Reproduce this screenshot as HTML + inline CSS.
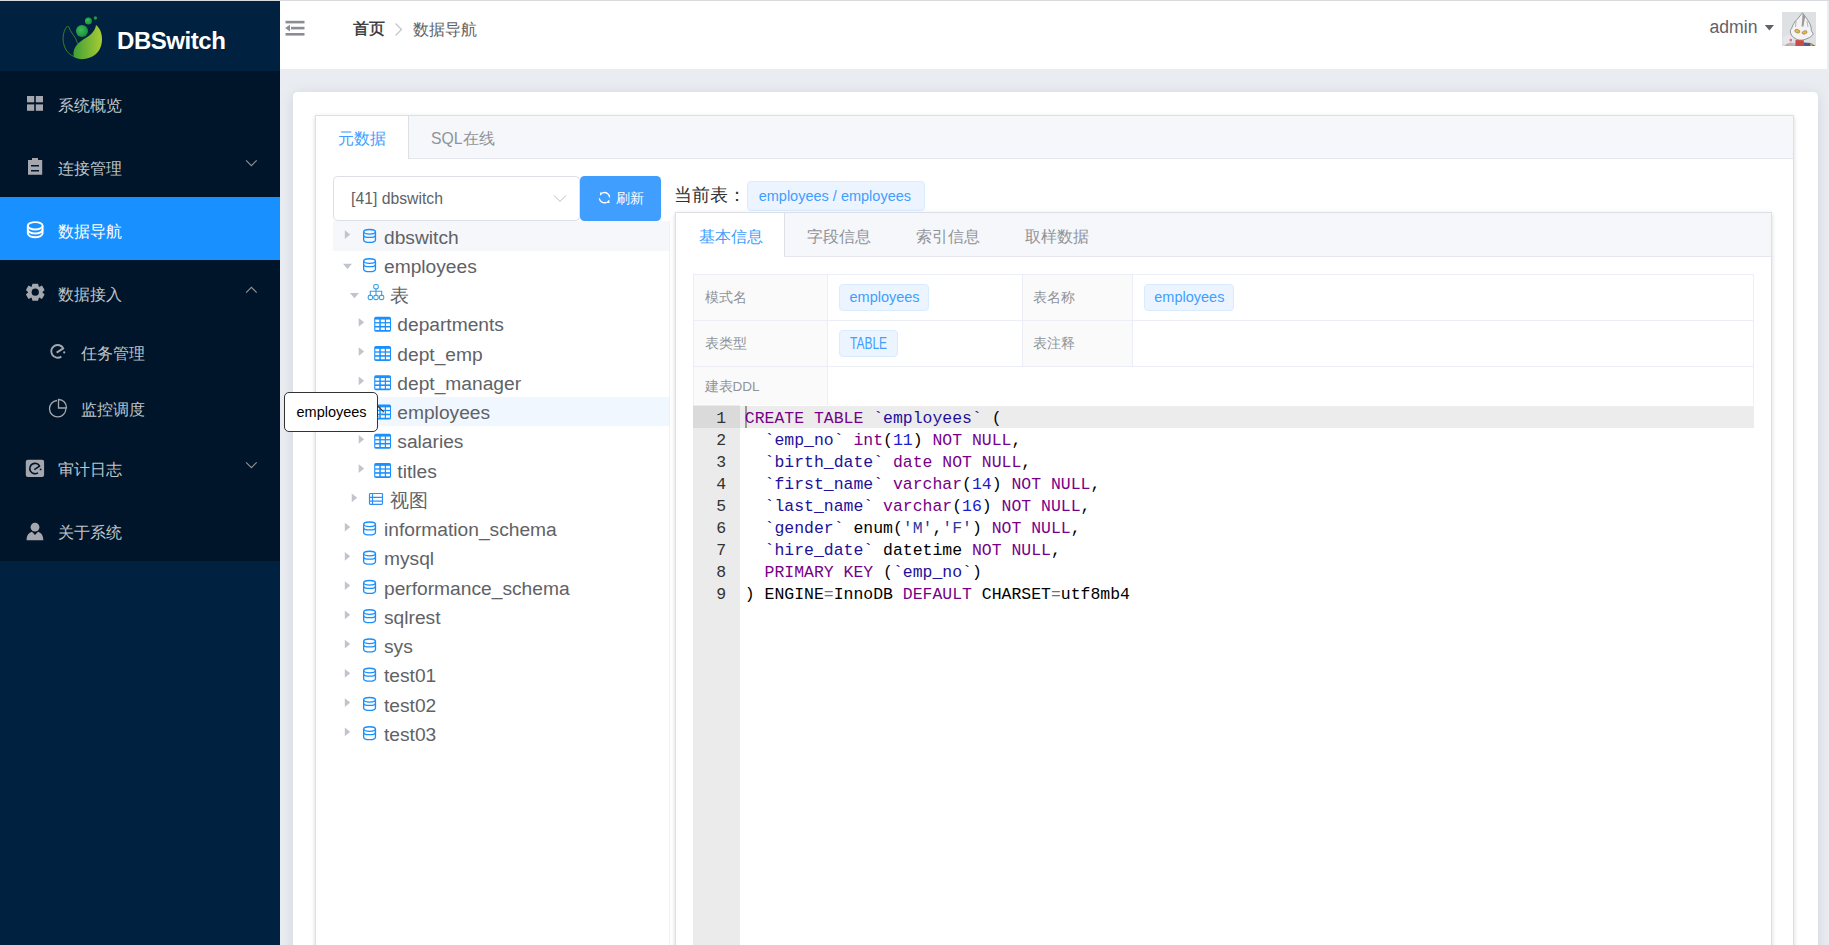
<!DOCTYPE html>
<html><head><meta charset="utf-8">
<style>
*{box-sizing:border-box;margin:0;padding:0}
html,body{width:1829px;height:945px;overflow:hidden}
body{position:relative;background:#e9ecf1;font-family:"Liberation Sans",sans-serif;color:#606266}
svg{position:absolute;overflow:visible}
#topline{position:absolute;left:0;top:0;width:1829px;height:1px;background:#d8dadd;z-index:50}
#sidebar{position:absolute;left:0;top:0;width:280px;height:945px;background:#002140}
#logo{position:absolute;left:0;top:0;width:280px;height:71px;background:#002140}
#logo .name{position:absolute;left:117px;top:25.5px;font-size:24px;font-weight:bold;color:#fff;line-height:30px;letter-spacing:-0.45px;white-space:nowrap}
#menu{position:absolute;left:0;top:71px;width:280px;height:490px;background:#001529}
.mi{position:absolute;left:0;width:280px;height:63px;color:#bfc5cc;font-size:15.75px}
.mi .t{position:absolute;left:58px;top:2.5px;line-height:63px;white-space:nowrap}
.mi.sub{height:56px}
.mi.sub .t{left:81px;line-height:56px}
.mi.active{background:#1890ff;color:#fff}
#header{position:absolute;left:280px;top:0;width:1547px;height:69px;background:#fff}
#header .bc1{position:absolute;left:73px;top:17px;font-size:15.75px;line-height:24px;color:#303133;-webkit-text-stroke:0.4px #303133}
#header .bc2{position:absolute;left:132.5px;top:18px;font-size:15.75px;line-height:24px;color:#606266}
#header .admin{position:absolute;left:1429.5px;top:14.3px;font-size:17.6px;line-height:26px;color:#5f6268}
#tabs .tab1{position:absolute;left:0;top:0;width:92.5px;height:43px;background:#fff;border-right:1px solid #dcdfe6}
.ttxt{position:absolute;margin-left:-1px;top:126.8px;font-size:15.75px;line-height:24px;white-space:nowrap}
.ttxt2{position:absolute;top:225px;font-size:15.75px;line-height:24px;white-space:nowrap;color:#909399}
#sel{position:absolute;left:333px;top:176px;width:247px;height:44.5px;border:1px solid #dcdfe6;border-radius:4.5px;background:#fff}
#sel span{position:absolute;left:17px;top:10px;font-size:15.75px;line-height:24px;color:#606266;white-space:nowrap}
#btn{position:absolute;left:580px;top:176px;width:81px;height:44.5px;border-radius:4.5px;background:#409eff}
#btn span{position:absolute;left:36px;top:10.8px;font-size:13.75px;line-height:24px;color:#fff;white-space:nowrap}
#tree{position:absolute;left:333px;top:221.3px;width:336.7px;height:600px}
#curlbl{position:absolute;left:674px;top:182.5px;font-size:17.8px;line-height:24px;color:#303133;white-space:nowrap}
.tag{position:absolute;background:#ecf5ff;border:1px solid #d9ecff;border-radius:4px;color:#409eff;font-size:14.5px;white-space:nowrap}
#tabs2{position:absolute;left:675px;top:212.3px;width:1097px;height:800px;background:#fff;border:1px solid #dcdfe6;box-shadow:0 2px 4px rgba(0,0,0,.12),0 0 6px rgba(0,0,0,.04)}
#tabs2 .hd{position:absolute;left:0;top:0;width:100%;height:44px;background:#f5f7fa;border-bottom:1px solid #e4e7ed}
#tabs2 .tab1{position:absolute;left:0;top:0;width:108.8px;height:44px;background:#fff;border-right:1px solid #dcdfe6}
#desc{position:absolute;left:693px;top:274px;width:1061px;height:131px}
#desc .lblbg{position:absolute;background:#fafafa}
#desc .hl{position:absolute;left:0;width:1061px;height:1px;background:#ebeef5}
#desc .vl{position:absolute;top:0;width:1px;background:#ebeef5}
#desc .lt{position:absolute;margin-top:1px;left:11.5px;font-size:13.5px;line-height:24px;color:#909399;white-space:nowrap}
.trow{position:absolute;left:0;width:336.7px;height:29.25px}
.tt{position:absolute;margin-top:1.3px;height:29.25px;line-height:29.25px;font-size:19.2px;color:#606266;white-space:nowrap}
#tip{position:absolute;left:284.2px;top:391.5px;width:93.5px;height:40px;background:#fff;border:1px solid #333;border-radius:5px;color:#000;font-size:14.5px;line-height:38px;padding-left:11.3px;z-index:20;white-space:nowrap}
#code{position:absolute;left:693px;top:405.2px;width:1060.5px;height:540px;background:#fff;font-family:"Liberation Mono",monospace;font-size:16.47px;color:#000}
#code .gutter{position:absolute;left:0;top:0;width:47px;height:540px;background:#ebebeb}
#code .gact{position:absolute;left:0;top:0.8px;width:47px;height:22px;background:#dadada}
#code .lact{position:absolute;left:47px;top:0.8px;width:1013.5px;height:22px;background:#ececec}
#code .cursor{position:absolute;left:51.9px;top:0.8px;width:2px;height:22px;background:#9a9a9a}
#code .ln{position:absolute;left:0;width:33px;text-align:right;height:22px;line-height:22px;padding-top:2.6px;color:#333}
#code .cl{position:absolute;left:51.8px;height:22px;line-height:22px;padding-top:2.6px;white-space:pre}
#code .k{color:#770088}
#code .v{color:#221199}
#code .n{color:#1a1ad0}
#code .s{color:#2e3a9e}
#code .o{color:#6a7480}
#card{position:absolute;left:293px;top:92px;width:1525px;height:900px;background:#fff;border-radius:4.5px;box-shadow:0 2.25px 13.5px 0 rgba(0,0,0,.1)}
#tabs{position:absolute;left:315px;top:115px;width:1479px;height:900px;background:#fff;border:1px solid #dcdfe6;box-shadow:0 2px 4px rgba(0,0,0,.12),0 0 6px rgba(0,0,0,.04)}
#tabs .hd{position:absolute;left:0;top:0;width:100%;height:43px;background:#f5f7fa;border-bottom:1px solid #e4e7ed}
</style></head><body>
<div id="topline"></div>
<div id="sidebar">
  <div id="logo">
    <svg width="280" height="71" style="left:0;top:0">
      <defs>
        <linearGradient id="lg" x1="0" y1="0" x2="1" y2="0">
          <stop offset="0" stop-color="#3f9f35"/><stop offset="1" stop-color="#a8cc34"/>
        </linearGradient>
        <radialGradient id="dg" cx="0.4" cy="0.4" r="0.7">
          <stop offset="0" stop-color="#3dbb55"/><stop offset="1" stop-color="#14883a"/>
        </radialGradient>
      </defs>
      <path d="M67.5 26 C60 34 62 52 74 56.5" fill="none" stroke="#3d8a2a" stroke-width="0.9"/>
      <path d="M68.4 26.2 C70.5 33 76 36.5 77.7 43.7" fill="none" stroke="#3d8a2a" stroke-width="0.9"/>
      <path d="M96 25 C104 31 104 47 96 54 C90 59 80 61 74 57 C72 50 76 44 84 39 C91 35 95 31 96 25 Z" fill="url(#lg)"/>
      <circle cx="82" cy="31" r="6" fill="url(#dg)"/>
      <circle cx="88.4" cy="21" r="3.5" fill="url(#dg)"/>
      <circle cx="95.4" cy="18" r="1.7" fill="#1f9a40"/>
    </svg>
    <div class="name">DBSwitch</div>
  </div>
  <div id="menu">
    <div class="mi" style="top:0"><span class="t">系统概览</span></div>
    <div class="mi" style="top:63px"><span class="t">连接管理</span></div>
    <div class="mi active" style="top:126px"><span class="t">数据导航</span></div>
    <div class="mi" style="top:189px"><span class="t">数据接入</span></div>
    <div class="mi sub" style="top:252px"><span class="t">任务管理</span></div>
    <div class="mi sub" style="top:308px"><span class="t">监控调度</span></div>
    <div class="mi" style="top:364px"><span class="t">审计日志</span></div>
    <div class="mi" style="top:427px"><span class="t">关于系统</span></div>
    <svg width="280" height="490" style="left:0;top:-71px">
      <g fill="#a4a7ad">
        <rect x="27" y="96" width="7.2" height="6.3"/><rect x="35.8" y="96" width="7.2" height="6.3"/>
        <rect x="27" y="104.4" width="7.2" height="6.4"/><rect x="35.8" y="104.4" width="7.2" height="6.4"/>
      </g>
      <path d="M28 160 H32 V158 H38 V160 H42.2 V174.8 H28 Z M31 165 V166.5 H39 V165 Z M31 170 V171.5 H39 V170 Z" fill="#a4a7ad" fill-rule="evenodd"/>
      <g fill="none" stroke="#fff" stroke-width="1.9">
        <ellipse cx="35.2" cy="225.8" rx="7.4" ry="3.7"/>
        <path d="M27.8 225.8 V233.3 C27.8 235.5 31 237.2 35.2 237.2 C39.4 237.2 42.6 235.5 42.6 233.3 V225.8"/>
        <path d="M27.8 229.6 C27.8 231.8 31 233.5 35.2 233.5 C39.4 233.5 42.6 231.8 42.6 229.6"/>
      </g>
      <path d="M32.5 283.8 H38 L39 287 L42 285.5 L44.6 290 L42.3 292.2 L44.6 294.5 L42 299 L39 297.5 L38 300.7 H32.5 L31.5 297.5 L28.5 299 L25.9 294.5 L28.2 292.2 L25.9 290 L28.5 285.5 L31.5 287 Z" fill="#a4a7ad"/>
      <circle cx="35.25" cy="292.2" r="3.6" fill="#001529"/>
      <g fill="none" stroke="#a4a7ad" stroke-width="1.9">
        <path d="M61.3 356.6 A6.4 6.4 0 1 1 63.3 348.4 L56.6 352.6" stroke-linejoin="round"/>
      </g>
      <circle cx="64.2" cy="352.4" r="1.1" fill="#a4a7ad"/>
      <g fill="none" stroke="#a4a7ad" stroke-width="1.3">
        <path d="M57 400.5 A8.2 8.2 0 1 0 65.9 408.8"/>
        <path d="M58.5 399.5 V408 H66.5 A8 8 0 0 0 58.5 399.5 Z"/>
      </g>
      <rect x="25.8" y="459.7" width="18.3" height="17.3" rx="2" fill="#a4a7ad"/>
      <g fill="none" stroke="#001529" stroke-width="1.6">
        <path d="M38 472.8 A5.2 5.2 0 1 1 39.6 466.1 L34.3 469.55" stroke-linejoin="round"/>
      </g>
      <circle cx="40.6" cy="469.4" r="0.95" fill="#001529"/>
      <circle cx="35" cy="527.2" r="4.4" fill="#a4a7ad"/>
      <path d="M26.6 540.2 C26.6 535 29 532.6 32 531.8 L35 535 L38 531.8 C41 532.6 43.3 535 43.3 540.2 Z" fill="#a4a7ad"/>
      <g fill="none" stroke="#909399" stroke-width="1.1">
        <path d="M246.1 160.3 L251.4 165.6 L256.7 160.3"/>
        <path d="M246.1 292.6 L251.4 287.3 L256.7 292.6"/>
        <path d="M246.1 462.3 L251.4 467.6 L256.7 462.3"/>
      </g>
    </svg>
  </div>
</div>
<div id="header">
  <svg width="40" height="40" style="left:0;top:0">
    <g fill="#8a8d93">
      <rect x="5.5" y="20.8" width="19" height="2.6"/>
      <rect x="11" y="26.8" width="13.5" height="2.6"/>
      <rect x="5.5" y="33" width="19" height="2.6"/>
      <path d="M5.2 28.1 L10 24.8 V31.4 Z"/>
    </g>
  </svg>
  <div class="bc1">首页</div>
  <svg width="20" height="20" style="left:0;top:0"><path d="M115.5 23.5 L121.5 29.5 L115.5 35.5" fill="none" stroke="#c0c4cc" stroke-width="1.2"/></svg>
  <div class="bc2">数据导航</div>
  <div class="admin">admin</div>
  <svg width="20" height="20" style="left:0;top:0"><path d="M1484.8 25 H1494 L1489.4 30.4 Z" fill="#5f6268"/></svg>
  <svg width="34" height="34" style="left:1502px;top:12px">
    <rect width="34" height="34" fill="#dee1e3"/>
    <circle cx="6" cy="28" r="5" fill="#e9e7ec"/>
    <rect x="7.6" y="28.5" width="2.6" height="5.5" fill="#efc7cd"/>
    <circle cx="8.8" cy="28" r="1.3" fill="#d4747c"/>
    <path d="M20.5 0.8 L25 7 C28 11 29.6 15 29.3 18.5 L31.3 22 C30 24 28 25.5 26 26.2 C23 27.6 20 28.5 17 28 C13 27.2 9.8 24.5 8.8 21.5 C8 19.5 8.2 17.8 9.6 16.6 C10.6 13 12.6 9.6 15 7.6 C17 5 19 2.8 20.5 0.8 Z" fill="#f3f3f3" stroke="#5b5b5b" stroke-width="0.6"/>
    <path d="M20.6 1.5 L19.6 14.5 L21.4 14.5 L23.2 4.5 Z" fill="#9b9b9b"/>
    <path d="M14 9 L13.5 15 M25 9 L26 15" stroke="#777" stroke-width="0.5" fill="none"/>
    <ellipse cx="15.3" cy="19.2" rx="2.7" ry="1.7" transform="rotate(18 15.3 19.2)" fill="#f1b53d" stroke="#555" stroke-width="0.4"/>
    <ellipse cx="22.6" cy="20.4" rx="2.6" ry="1.6" transform="rotate(-18 22.6 20.4)" fill="#f1b53d" stroke="#555" stroke-width="0.4"/>
    <path d="M13.6 28 L21.6 28.2 L22.6 34 L13.2 34 Z" fill="#c94b46"/>
    <path d="M21.8 30.5 L28.5 31 L33.5 34 L22.2 34 Z" fill="#4e5b8f"/>
    <path d="M2 34 L6 31 L12.5 31 L13.2 34 Z" fill="#9aa0b8" opacity="0.6"/>
    <rect x="28.3" y="31.3" width="2.2" height="2.7" fill="#d8a43e"/>
    <rect x="4.6" y="32" width="1.6" height="2" fill="#d8a43e"/>
  </svg>
</div>
<div id="card"></div>
<div id="tabs"><div class="hd"></div>
  <div class="tab1"></div>
</div>
<div class="ttxt" style="left:338.7px;color:#409eff">元数据</div>
<div class="ttxt" style="left:432px;color:#909399">SQL在线</div>
<div id="sel"><span>[41] dbswitch</span></div>
<svg width="20" height="10" style="left:0;top:0"><path d="M554 195.4 L560 201.4 L566 195.4" fill="none" stroke="#aeb2ba" stroke-width="0.85"/></svg>
<div id="btn"><span>刷新</span></div>
<svg width="20" height="20" style="left:0;top:0">
  <g fill="none" stroke="#fff" stroke-width="1.3">
    <path d="M602.6 192.9 A5.1 5.1 0 0 1 609.6 197.6"/>
    <path d="M606.4 202.3 A5.1 5.1 0 0 1 599.3 198.4"/>
  </g>
  <path d="M599.9 192.6 L603.6 192.6 L600.2 195.8 Z" fill="#fff"/>
  <path d="M609.5 203 L605.8 203 L609.3 199.6 Z" fill="#fff"/>
</svg>
<div id="tree">
<div class="trow" style="top:0.00px;background:#f5f7fa"></div>
<div class="tt" style="left:51.00px;top:0.00px">dbswitch</div>
<div class="tt" style="left:51.00px;top:29.25px">employees</div>
<div class="tt" style="left:57.20px;top:58.50px">表</div>
<div class="tt" style="left:64.30px;top:87.75px">departments</div>
<div class="tt" style="left:64.30px;top:117.00px">dept_emp</div>
<div class="tt" style="left:64.30px;top:146.25px">dept_manager</div>
<div class="trow" style="top:175.50px;background:#f0f7ff"></div>
<div class="tt" style="left:64.30px;top:175.50px">employees</div>
<div class="tt" style="left:64.30px;top:204.75px">salaries</div>
<div class="tt" style="left:64.30px;top:234.00px">titles</div>
<div class="tt" style="left:57.20px;top:263.25px">视图</div>
<div class="tt" style="left:51.00px;top:292.50px">information_schema</div>
<div class="tt" style="left:51.00px;top:321.75px">mysql</div>
<div class="tt" style="left:51.00px;top:351.00px">performance_schema</div>
<div class="tt" style="left:51.00px;top:380.25px">sqlrest</div>
<div class="tt" style="left:51.00px;top:409.50px">sys</div>
<div class="tt" style="left:51.00px;top:438.75px">test01</div>
<div class="tt" style="left:51.00px;top:468.00px">test02</div>
<div class="tt" style="left:51.00px;top:497.25px">test03</div>
<svg width="10" height="10" style="left:-333px;top:-221.3px"><g transform="translate(0,-1)"><path d="M344.80 231.20 L350.20 235.60 L344.80 240.00 Z" fill="#c0c4cc"/></g>
<g fill="none" stroke="#1890ff" stroke-width="1.35" transform="translate(363.00,228.90)"><ellipse cx="6.55" cy="2.9" rx="5.9" ry="2.3"/><path d="M0.65 2.9 V11 C0.65 12.4 3.3 13.45 6.55 13.45 C9.8 13.45 12.45 12.4 12.45 11 V2.9"/><path d="M0.65 6.3 C0.65 7.6 3.3 8.5 6.55 8.5 C9.8 8.5 12.45 7.6 12.45 6.3"/></g>
<g transform="translate(0,0.7)"><path d="M343.00 263.05 L352.00 263.05 L347.50 268.35 Z" fill="#c0c4cc"/></g>
<g fill="none" stroke="#1890ff" stroke-width="1.35" transform="translate(363.00,258.15)"><ellipse cx="6.55" cy="2.9" rx="5.9" ry="2.3"/><path d="M0.65 2.9 V11 C0.65 12.4 3.3 13.45 6.55 13.45 C9.8 13.45 12.45 12.4 12.45 11 V2.9"/><path d="M0.65 6.3 C0.65 7.6 3.3 8.5 6.55 8.5 C9.8 8.5 12.45 7.6 12.45 6.3"/></g>
<g transform="translate(0,0.7)"><path d="M349.95 292.30 L358.95 292.30 L354.45 297.60 Z" fill="#c0c4cc"/></g>
<g fill="none" stroke="#3aa0e0" stroke-width="1.1" transform="translate(368,284.00)"><rect x="5.7" y="0.5" width="4.6" height="4.4" rx="1.6"/><path d="M8 4.9 V7.3 M2.3 11.4 V7.3 H13.7 V11.4 M8 7.3 V11.4"/><rect x="0.2" y="11.4" width="4.4" height="4.2" rx="1.6"/><rect x="5.8" y="11.4" width="4.4" height="4.2" rx="1.6"/><rect x="11.4" y="11.4" width="4.4" height="4.2" rx="1.6"/></g>
<g transform="translate(0,-1)"><path d="M358.70 318.95 L364.10 323.35 L358.70 327.75 Z" fill="#c0c4cc"/></g>
<g transform="translate(374.20,316.80)"><rect x="0" y="0" width="16.8" height="14.9" rx="1.6" fill="#1890ff"/><rect x="1.10" y="2.80" width="4.0" height="2.5" fill="#fff"/><rect x="6.60" y="2.80" width="4.0" height="2.5" fill="#fff"/><rect x="11.80" y="2.80" width="4.0" height="2.5" fill="#fff"/><rect x="1.10" y="6.60" width="4.0" height="2.5" fill="#fff"/><rect x="6.60" y="6.60" width="4.0" height="2.5" fill="#fff"/><rect x="11.80" y="6.60" width="4.0" height="2.5" fill="#fff"/><rect x="1.10" y="10.70" width="4.0" height="2.5" fill="#fff"/><rect x="6.60" y="10.70" width="4.0" height="2.5" fill="#fff"/><rect x="11.80" y="10.70" width="4.0" height="2.5" fill="#fff"/></g>
<g transform="translate(0,-1)"><path d="M358.70 348.20 L364.10 352.60 L358.70 357.00 Z" fill="#c0c4cc"/></g>
<g transform="translate(374.20,346.05)"><rect x="0" y="0" width="16.8" height="14.9" rx="1.6" fill="#1890ff"/><rect x="1.10" y="2.80" width="4.0" height="2.5" fill="#fff"/><rect x="6.60" y="2.80" width="4.0" height="2.5" fill="#fff"/><rect x="11.80" y="2.80" width="4.0" height="2.5" fill="#fff"/><rect x="1.10" y="6.60" width="4.0" height="2.5" fill="#fff"/><rect x="6.60" y="6.60" width="4.0" height="2.5" fill="#fff"/><rect x="11.80" y="6.60" width="4.0" height="2.5" fill="#fff"/><rect x="1.10" y="10.70" width="4.0" height="2.5" fill="#fff"/><rect x="6.60" y="10.70" width="4.0" height="2.5" fill="#fff"/><rect x="11.80" y="10.70" width="4.0" height="2.5" fill="#fff"/></g>
<g transform="translate(0,-1)"><path d="M358.70 377.45 L364.10 381.85 L358.70 386.25 Z" fill="#c0c4cc"/></g>
<g transform="translate(374.20,375.30)"><rect x="0" y="0" width="16.8" height="14.9" rx="1.6" fill="#1890ff"/><rect x="1.10" y="2.80" width="4.0" height="2.5" fill="#fff"/><rect x="6.60" y="2.80" width="4.0" height="2.5" fill="#fff"/><rect x="11.80" y="2.80" width="4.0" height="2.5" fill="#fff"/><rect x="1.10" y="6.60" width="4.0" height="2.5" fill="#fff"/><rect x="6.60" y="6.60" width="4.0" height="2.5" fill="#fff"/><rect x="11.80" y="6.60" width="4.0" height="2.5" fill="#fff"/><rect x="1.10" y="10.70" width="4.0" height="2.5" fill="#fff"/><rect x="6.60" y="10.70" width="4.0" height="2.5" fill="#fff"/><rect x="11.80" y="10.70" width="4.0" height="2.5" fill="#fff"/></g>
<g transform="translate(0,-1)"><path d="M358.70 406.70 L364.10 411.10 L358.70 415.50 Z" fill="#c0c4cc"/></g>
<g transform="translate(374.20,404.55)"><rect x="0" y="0" width="16.8" height="14.9" rx="1.6" fill="#1890ff"/><rect x="1.10" y="2.80" width="4.0" height="2.5" fill="#fff"/><rect x="6.60" y="2.80" width="4.0" height="2.5" fill="#fff"/><rect x="11.80" y="2.80" width="4.0" height="2.5" fill="#fff"/><rect x="1.10" y="6.60" width="4.0" height="2.5" fill="#fff"/><rect x="6.60" y="6.60" width="4.0" height="2.5" fill="#fff"/><rect x="11.80" y="6.60" width="4.0" height="2.5" fill="#fff"/><rect x="1.10" y="10.70" width="4.0" height="2.5" fill="#fff"/><rect x="6.60" y="10.70" width="4.0" height="2.5" fill="#fff"/><rect x="11.80" y="10.70" width="4.0" height="2.5" fill="#fff"/></g>
<g transform="translate(0,-1)"><path d="M358.70 435.95 L364.10 440.35 L358.70 444.75 Z" fill="#c0c4cc"/></g>
<g transform="translate(374.20,433.80)"><rect x="0" y="0" width="16.8" height="14.9" rx="1.6" fill="#1890ff"/><rect x="1.10" y="2.80" width="4.0" height="2.5" fill="#fff"/><rect x="6.60" y="2.80" width="4.0" height="2.5" fill="#fff"/><rect x="11.80" y="2.80" width="4.0" height="2.5" fill="#fff"/><rect x="1.10" y="6.60" width="4.0" height="2.5" fill="#fff"/><rect x="6.60" y="6.60" width="4.0" height="2.5" fill="#fff"/><rect x="11.80" y="6.60" width="4.0" height="2.5" fill="#fff"/><rect x="1.10" y="10.70" width="4.0" height="2.5" fill="#fff"/><rect x="6.60" y="10.70" width="4.0" height="2.5" fill="#fff"/><rect x="11.80" y="10.70" width="4.0" height="2.5" fill="#fff"/></g>
<g transform="translate(0,-1)"><path d="M358.70 465.20 L364.10 469.60 L358.70 474.00 Z" fill="#c0c4cc"/></g>
<g transform="translate(374.20,463.05)"><rect x="0" y="0" width="16.8" height="14.9" rx="1.6" fill="#1890ff"/><rect x="1.10" y="2.80" width="4.0" height="2.5" fill="#fff"/><rect x="6.60" y="2.80" width="4.0" height="2.5" fill="#fff"/><rect x="11.80" y="2.80" width="4.0" height="2.5" fill="#fff"/><rect x="1.10" y="6.60" width="4.0" height="2.5" fill="#fff"/><rect x="6.60" y="6.60" width="4.0" height="2.5" fill="#fff"/><rect x="11.80" y="6.60" width="4.0" height="2.5" fill="#fff"/><rect x="1.10" y="10.70" width="4.0" height="2.5" fill="#fff"/><rect x="6.60" y="10.70" width="4.0" height="2.5" fill="#fff"/><rect x="11.80" y="10.70" width="4.0" height="2.5" fill="#fff"/></g>
<g transform="translate(0,-1)"><path d="M351.75 494.45 L357.15 498.85 L351.75 503.25 Z" fill="#c0c4cc"/></g>
<g fill="none" stroke="#2f8ff5" stroke-width="1.2" transform="translate(368.90,492.90)"><rect x="0.6" y="0.6" width="13" height="10.9" rx="0.8"/><path d="M0.6 4.5 H13.6 M0.6 8.2 H13.6 M3.6 0.6 V11.5"/></g>
<g transform="translate(0,-1)"><path d="M344.80 523.70 L350.20 528.10 L344.80 532.50 Z" fill="#c0c4cc"/></g>
<g fill="none" stroke="#1890ff" stroke-width="1.35" transform="translate(363.00,521.40)"><ellipse cx="6.55" cy="2.9" rx="5.9" ry="2.3"/><path d="M0.65 2.9 V11 C0.65 12.4 3.3 13.45 6.55 13.45 C9.8 13.45 12.45 12.4 12.45 11 V2.9"/><path d="M0.65 6.3 C0.65 7.6 3.3 8.5 6.55 8.5 C9.8 8.5 12.45 7.6 12.45 6.3"/></g>
<g transform="translate(0,-1)"><path d="M344.80 552.95 L350.20 557.35 L344.80 561.75 Z" fill="#c0c4cc"/></g>
<g fill="none" stroke="#1890ff" stroke-width="1.35" transform="translate(363.00,550.65)"><ellipse cx="6.55" cy="2.9" rx="5.9" ry="2.3"/><path d="M0.65 2.9 V11 C0.65 12.4 3.3 13.45 6.55 13.45 C9.8 13.45 12.45 12.4 12.45 11 V2.9"/><path d="M0.65 6.3 C0.65 7.6 3.3 8.5 6.55 8.5 C9.8 8.5 12.45 7.6 12.45 6.3"/></g>
<g transform="translate(0,-1)"><path d="M344.80 582.20 L350.20 586.60 L344.80 591.00 Z" fill="#c0c4cc"/></g>
<g fill="none" stroke="#1890ff" stroke-width="1.35" transform="translate(363.00,579.90)"><ellipse cx="6.55" cy="2.9" rx="5.9" ry="2.3"/><path d="M0.65 2.9 V11 C0.65 12.4 3.3 13.45 6.55 13.45 C9.8 13.45 12.45 12.4 12.45 11 V2.9"/><path d="M0.65 6.3 C0.65 7.6 3.3 8.5 6.55 8.5 C9.8 8.5 12.45 7.6 12.45 6.3"/></g>
<g transform="translate(0,-1)"><path d="M344.80 611.45 L350.20 615.85 L344.80 620.25 Z" fill="#c0c4cc"/></g>
<g fill="none" stroke="#1890ff" stroke-width="1.35" transform="translate(363.00,609.15)"><ellipse cx="6.55" cy="2.9" rx="5.9" ry="2.3"/><path d="M0.65 2.9 V11 C0.65 12.4 3.3 13.45 6.55 13.45 C9.8 13.45 12.45 12.4 12.45 11 V2.9"/><path d="M0.65 6.3 C0.65 7.6 3.3 8.5 6.55 8.5 C9.8 8.5 12.45 7.6 12.45 6.3"/></g>
<g transform="translate(0,-1)"><path d="M344.80 640.70 L350.20 645.10 L344.80 649.50 Z" fill="#c0c4cc"/></g>
<g fill="none" stroke="#1890ff" stroke-width="1.35" transform="translate(363.00,638.40)"><ellipse cx="6.55" cy="2.9" rx="5.9" ry="2.3"/><path d="M0.65 2.9 V11 C0.65 12.4 3.3 13.45 6.55 13.45 C9.8 13.45 12.45 12.4 12.45 11 V2.9"/><path d="M0.65 6.3 C0.65 7.6 3.3 8.5 6.55 8.5 C9.8 8.5 12.45 7.6 12.45 6.3"/></g>
<g transform="translate(0,-1)"><path d="M344.80 669.95 L350.20 674.35 L344.80 678.75 Z" fill="#c0c4cc"/></g>
<g fill="none" stroke="#1890ff" stroke-width="1.35" transform="translate(363.00,667.65)"><ellipse cx="6.55" cy="2.9" rx="5.9" ry="2.3"/><path d="M0.65 2.9 V11 C0.65 12.4 3.3 13.45 6.55 13.45 C9.8 13.45 12.45 12.4 12.45 11 V2.9"/><path d="M0.65 6.3 C0.65 7.6 3.3 8.5 6.55 8.5 C9.8 8.5 12.45 7.6 12.45 6.3"/></g>
<g transform="translate(0,-1)"><path d="M344.80 699.20 L350.20 703.60 L344.80 708.00 Z" fill="#c0c4cc"/></g>
<g fill="none" stroke="#1890ff" stroke-width="1.35" transform="translate(363.00,696.90)"><ellipse cx="6.55" cy="2.9" rx="5.9" ry="2.3"/><path d="M0.65 2.9 V11 C0.65 12.4 3.3 13.45 6.55 13.45 C9.8 13.45 12.45 12.4 12.45 11 V2.9"/><path d="M0.65 6.3 C0.65 7.6 3.3 8.5 6.55 8.5 C9.8 8.5 12.45 7.6 12.45 6.3"/></g>
<g transform="translate(0,-1)"><path d="M344.80 728.45 L350.20 732.85 L344.80 737.25 Z" fill="#c0c4cc"/></g>
<g fill="none" stroke="#1890ff" stroke-width="1.35" transform="translate(363.00,726.15)"><ellipse cx="6.55" cy="2.9" rx="5.9" ry="2.3"/><path d="M0.65 2.9 V11 C0.65 12.4 3.3 13.45 6.55 13.45 C9.8 13.45 12.45 12.4 12.45 11 V2.9"/><path d="M0.65 6.3 C0.65 7.6 3.3 8.5 6.55 8.5 C9.8 8.5 12.45 7.6 12.45 6.3"/></g></svg>
</div>
<div id="tip">employees</div>
<svg width="10" height="10" style="left:0;top:0;z-index:21"><path d="M377.5 405.9 L383.8 411.9" fill="none" stroke="#333" stroke-width="1.1"/><path d="M383.8 411.9 L377.5 417.8" fill="none" stroke="#9a9a9a" stroke-width="0.9"/></svg>
<div style="position:absolute;left:669px;top:221px;width:1px;height:724px;background:#f0f1f3"></div>
<div id="curlbl">当前表：</div>
<div class="tag" style="left:747px;top:181px;width:177.5px;height:30px;padding-left:10.7px;line-height:28px">employees / employees</div>
<div id="tabs2"><div class="hd"></div><div class="tab1"></div></div>
<div class="ttxt2" style="left:698.5px;color:#409eff">基本信息</div>
<div class="ttxt2" style="left:807.1px">字段信息</div>
<div class="ttxt2" style="left:916.1px">索引信息</div>
<div class="ttxt2" style="left:1024.9px">取样数据</div>
<div id="desc">
  <div class="lblbg" style="left:0;top:0;width:134px;height:131px"></div>
  <div class="lblbg" style="left:329px;top:0;width:110px;height:92px"></div>
  <div class="hl" style="top:0"></div><div class="hl" style="top:46px"></div><div class="hl" style="top:92px"></div>
  <div class="vl" style="left:0;height:131px"></div><div class="vl" style="left:134px;height:131px"></div>
  <div class="vl" style="left:329px;height:92px"></div><div class="vl" style="left:439px;height:92px"></div>
  <div class="vl" style="left:1060px;height:131px"></div>
  <div class="lt" style="top:11px">模式名</div>
  <div class="lt" style="top:57px">表类型</div>
  <div class="lt" style="top:99.5px">建表DDL</div>
  <div class="lt" style="left:340.3px;top:11px">表名称</div>
  <div class="lt" style="left:340.3px;top:57px">表注释</div>
</div>
<div class="tag" style="left:839.2px;top:284px;width:89.6px;height:26.8px;padding-left:9.3px;line-height:24.8px">employees</div>
<div class="tag" style="left:1144px;top:284.2px;width:89.8px;height:26.6px;padding-left:9.3px;line-height:24.6px">employees</div>
<div class="tag" style="left:839.2px;top:330px;width:58.6px;height:26.6px;padding-left:9.5px;line-height:25.4px"><span style="display:inline-block;font-size:16px;transform:scaleX(0.75);transform-origin:0 50%">TABLE</span></div>
<div id="code">
<div class="gutter"></div>
<div class="gact"></div>
<div class="lact"></div>
<div class="cursor"></div>
<div class="ln" style="top:0px">1</div>
<div class="cl" style="top:0px"><span class="k">CREATE</span> <span class="k">TABLE</span> <span class="v">`employees`</span> (</div>
<div class="ln" style="top:22px">2</div>
<div class="cl" style="top:22px">  <span class="v">`emp_no`</span> <span class="k">int</span>(<span class="n">11</span>) <span class="k">NOT</span> <span class="k">NULL</span>,</div>
<div class="ln" style="top:44px">3</div>
<div class="cl" style="top:44px">  <span class="v">`birth_date`</span> <span class="k">date</span> <span class="k">NOT</span> <span class="k">NULL</span>,</div>
<div class="ln" style="top:66px">4</div>
<div class="cl" style="top:66px">  <span class="v">`first_name`</span> <span class="k">varchar</span>(<span class="n">14</span>) <span class="k">NOT</span> <span class="k">NULL</span>,</div>
<div class="ln" style="top:88px">5</div>
<div class="cl" style="top:88px">  <span class="v">`last_name`</span> <span class="k">varchar</span>(<span class="n">16</span>) <span class="k">NOT</span> <span class="k">NULL</span>,</div>
<div class="ln" style="top:110px">6</div>
<div class="cl" style="top:110px">  <span class="v">`gender`</span> enum(<span class="s">'M'</span>,<span class="s">'F'</span>) <span class="k">NOT</span> <span class="k">NULL</span>,</div>
<div class="ln" style="top:132px">7</div>
<div class="cl" style="top:132px">  <span class="v">`hire_date`</span> datetime <span class="k">NOT</span> <span class="k">NULL</span>,</div>
<div class="ln" style="top:154px">8</div>
<div class="cl" style="top:154px">  <span class="k">PRIMARY</span> <span class="k">KEY</span> (<span class="v">`emp_no`</span>)</div>
<div class="ln" style="top:176px">9</div>
<div class="cl" style="top:176px">) ENGINE<span class="o">=</span>InnoDB <span class="k">DEFAULT</span> CHARSET<span class="o">=</span>utf8mb4</div>
</div>

</body></html>
